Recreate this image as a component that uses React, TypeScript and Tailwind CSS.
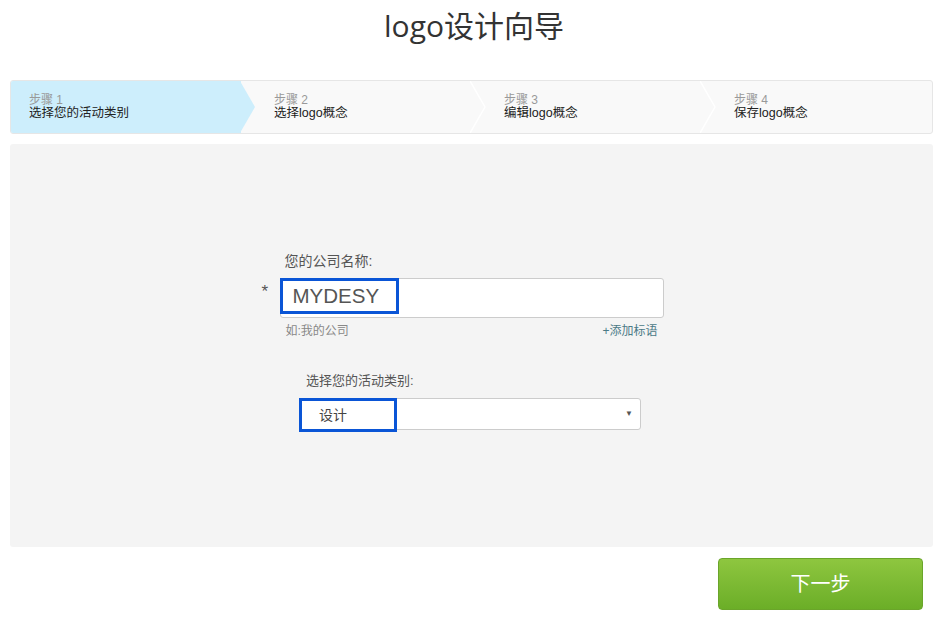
import React from "react";

const font = { fontFamily: '"Liberation Sans", "Noto Sans CJK SC", sans-serif' };

function Step({ n, title, active, first }: { n: number; title: string; active?: boolean; first?: boolean }) {
  return (
    <div className={`relative h-full flex flex-col justify-center ${first ? "pl-[18px]" : "pl-[33px]"} ${active ? "bg-[#cdeefc]" : ""}`}>
      <div className="text-[12px] leading-[12px] text-[#999]">步骤 {n}</div>
      <div className="text-[12.5px] leading-[14px] text-[#222]">{title}</div>
      {n < 4 && (
        <svg className="absolute top-0 right-[-15px] z-10" width="16" height="52" viewBox="0 0 16 52">
          {active ? (
            <polygon points="0,0 15,26 0,52" fill="#cdeefc" />
          ) : (
            <polyline points="0,0 15,26 0,52" fill="none" stroke="#ffffff" strokeWidth="1.5" />
          )}
        </svg>
      )}
    </div>
  );
}

export default function App() {
  return (
    <div className="w-[948px] h-[623px] bg-white overflow-hidden" style={font}>
      <div className="h-[50px] flex items-center justify-center pt-[1px]">
        <h1 className="text-[30px] text-[#333] font-normal leading-none" style={{ fontFamily: '"Open Sans", "Noto Sans CJK SC", sans-serif' }}>logo设计向导</h1>
      </div>
      <div className="mx-[10px] mt-[30px] w-[923px] h-[54px] border border-[#e6e6e6] rounded-[3px] bg-[#f9f9f9] grid grid-cols-[230px_230px_230px_1fr] overflow-hidden">
        <Step n={1} title="选择您的活动类别" active first />
        <Step n={2} title="选择logo概念" />
        <Step n={3} title="编辑logo概念" />
        <Step n={4} title="保存logo概念" />
      </div>
      <div className="mx-[10px] mt-[10px] w-[923px] h-[403px] bg-[#f4f4f4] rounded-[3px] flex flex-col items-center pt-[108px]">
        <div className="w-[384px]">
          <div className="text-[14px] text-[#555] pl-[5px] leading-[18px]">您的公司名称:</div>
          <div className="relative mt-[8px]">
            <span className="absolute left-[-18px] top-[1px] text-[17px] text-[#555]">*</span>
            <div className="h-[40px] bg-white border border-[#ccc] rounded-[3px] flex items-start">
              <div className="w-[119px] h-[36px] border-[3px] border-[#0a55d6] flex items-center pl-[10px] text-[20.5px] text-[#555] -mt-[1px] -ml-[1px]">
                MYDESY
              </div>
            </div>
          </div>
          <div className="flex justify-between mt-[5px] px-[6px] text-[12px] leading-[16px]">
            <span className="text-[#888]">如:我的公司</span>
            <span className="text-[#4b7a86]">+添加标语</span>
          </div>
        </div>
        <div className="w-[342px] mt-[33px] ml-[-3px]">
          <div className="text-[13px] text-[#555] pl-[7px] leading-[18px]">选择您的活动类别:</div>
          <div className="mt-[8px] h-[32px] bg-white border border-[#ccc] rounded-[3px] flex items-start justify-between relative">
            <div className="w-[98px] h-[34px] border-[3px] border-[#0a55d6] flex items-center pl-[17px] text-[14px] text-[#444] -mt-[1px] -ml-[1px]">
              设计
            </div>
            <span className="text-[8px] text-[#555] mr-[7px] mt-[9px]">▼</span>
          </div>
        </div>
      </div>
      <div className="flex justify-end pr-[25px] mt-[11px]">
        <button className="w-[205px] h-[52px] rounded-[4px] bg-gradient-to-b from-[#8ec63f] to-[#6bae27] border border-[#6aa52a] text-white text-[20px]">
          下一步
        </button>
      </div>
    </div>
  );
}
